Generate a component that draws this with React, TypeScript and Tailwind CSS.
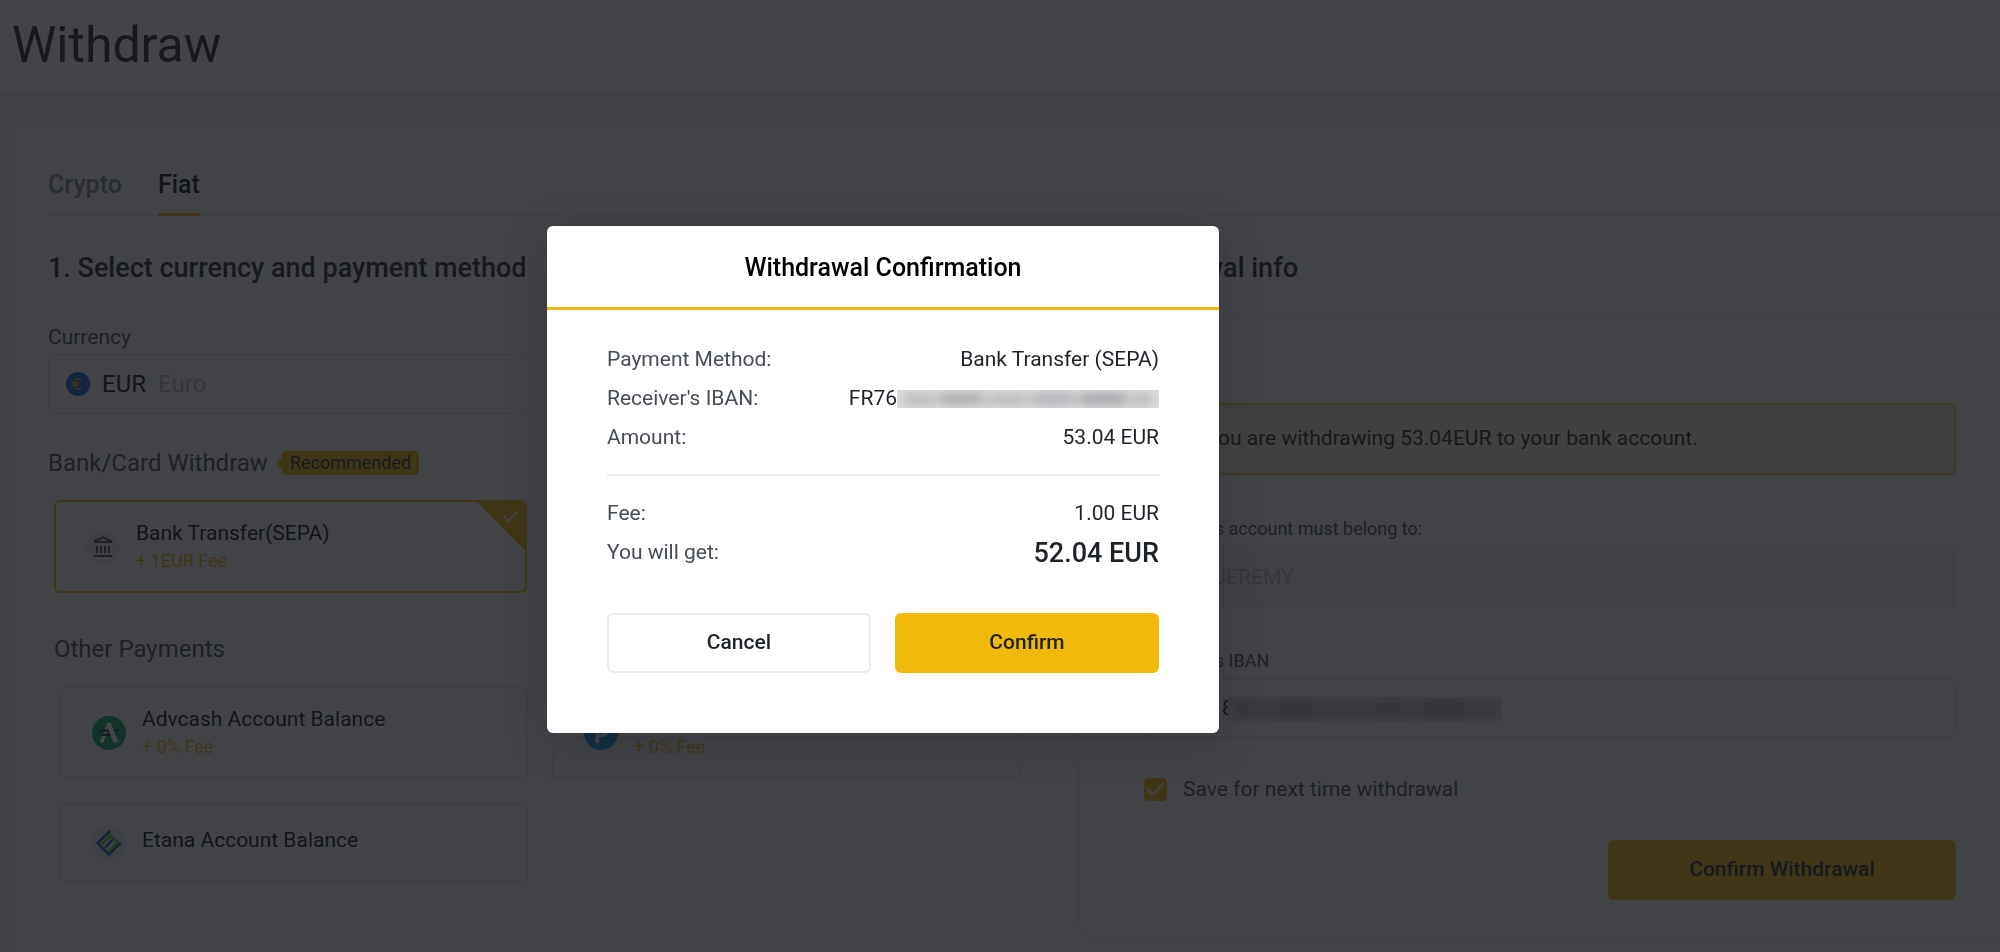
import React, { useState } from 'react';
import { Check } from 'lucide-react';

interface PaymentOption {
  id: string;
  name: string;
  fee?: string;
  icon: React.ReactNode;
}

const BankIcon = () => (
  <svg viewBox="0 0 34 34" className="w-[34px] h-[34px] shrink-0" aria-hidden="true">
    <circle cx="17" cy="17" r="17" fill="#f1f1f4" />
    <path d="M8 10.500 17 6l9 4.500V13H8z" fill="#474d57" />
    <path d="M12 11 17 8.500l5 2.500z" fill="#f1f1f4" />
    <path d="M10 16h2v7h-2zM14 16h2v7h-2zM18 16h2v7h-2zM22 16h2v7h-2zM8 25h18v2H8z" fill="#474d57" />
  </svg>
);

const AdvcashIcon = () => (
  <svg viewBox="0 0 34 34" className="w-[34px] h-[34px] shrink-0" aria-hidden="true">
    <circle cx="17" cy="17" r="17" fill="#0ea966" />
    <path d="M15.500 7h3.500l-7.500 19.500h-4z" fill="#fff" />
    <path d="M5.500 13.500h22l-1.500 2.200H8zM8.500 17.800h17L24 20H10z" fill="#14344a" />
    <path d="M15 9.500 16.500 7H19l7.500 19.500h-5.200z" fill="#fff" />
  </svg>
);

const PayeerIcon = () => (
  <svg viewBox="0 0 34 34" className="w-[34px] h-[34px] shrink-0" aria-hidden="true">
    <circle cx="17" cy="17" r="17" fill="#0a9be0" />
    <path d="M13.300 27V9.500h5.200a4.800 4.800 0 0 1 0 9.600h-5.200" fill="none" stroke="#fff" strokeWidth="3.400" />
  </svg>
);

const EtanaIcon = () => (
  <svg viewBox="0 0 34 34" className="w-[34px] h-[34px] shrink-0" aria-hidden="true">
    <circle cx="17" cy="17" r="17" fill="#f1f1f4" />
    <g fill="none" strokeWidth="2.600">
      <path d="M18 5 5.500 17.200 17 28.700l12-12" stroke="#1662ad" />
      <path d="m13 21.500 8-8" stroke="#1662ad" />
      <path d="m9.500 18.500 9-9 7.500 7-9 9" stroke="#4fb82e" />
    </g>
  </svg>
);

const EuroIcon = () => (
  <svg viewBox="0 0 24 24" className="w-6 h-6 shrink-0" aria-hidden="true">
    <circle cx="12" cy="12" r="12" fill="#0f5fd7" />
    <path d="M16 8.200a5 5 0 1 0 0 7.600M6.500 10.800h7M6.500 13.200h6.500" fill="none" stroke="#f0b90b" strokeWidth="1.500" />
  </svg>
);

const SEPA_OPTION: PaymentOption = { id: 'sepa', name: 'Bank Transfer(SEPA)', fee: '+ 1EUR Fee', icon: <BankIcon /> };

const OTHER_PAYMENTS: PaymentOption[] = [
  { id: 'advcash', name: 'Advcash Account Balance', fee: '+ 0% Fee', icon: <AdvcashIcon /> },
  { id: 'payeer', name: 'Payeer Account Balance', fee: '+ 0% Fee', icon: <PayeerIcon /> },
  { id: 'etana', name: 'Etana Account Balance', icon: <EtanaIcon /> },
];

function PaymentCard({ option, selected = false }: { option: PaymentOption; selected?: boolean }) {
  return (
    <button
      type="button"
      className={`relative flex items-center gap-4 overflow-hidden rounded-md border-2 pl-[30px] pr-6 text-left ${
        selected ? 'border-[#f0b90b]' : 'border-[#eaecef]'
      } ${option.fee ? 'h-[93px]' : 'h-20'}`}
    >
      {option.icon}
      <span className={option.fee ? 'flex flex-col' : 'flex flex-col pb-1.5'}>
        <span className="text-[21px] leading-7 text-[#0b0e11]">{option.name}</span>
        {option.fee && <span className="text-lg leading-7 text-[#f0b90b]">{option.fee}</span>}
      </span>
      {selected && (
        <svg viewBox="0 0 48 48" className="absolute right-0 top-0 w-12 h-12" aria-hidden="true">
          <path d="M0 0h48v48z" fill="#f0b90b" />
          <path d="m27 14 5 5 9-10" fill="none" stroke="#fff" strokeWidth="2" />
        </svg>
      )}
    </button>
  );
}

// Smudged strip that covers the private part of an account number
function Redacted({ className }: { className: string }) {
  return (
    <span className={`flex items-center overflow-hidden ${className}`} aria-hidden="true">
      <span className="flex h-3 w-full items-center justify-between gap-1 px-1.5 blur-[6px]">
        <span className="h-3 w-[13%] bg-[#b4b6b8]" />
        <span className="h-3 w-[19%] bg-[#a3a5a8]" />
        <span className="h-3 w-[16%] bg-[#b4b6b8]" />
        <span className="h-3 w-[18%] bg-[#a9abae]" />
        <span className="h-3 w-[20%] bg-[#9c9ea1]" />
        <span className="h-3 w-[9%] bg-[#b4b6b8]" />
      </span>
    </span>
  );
}

function SummaryRow({ label, children }: { label: string; children: React.ReactNode }) {
  return (
    <div className="flex items-center justify-between h-[39px]">
      <dt className="text-[#474d57]">{label}</dt>
      <dd className="text-[#1e2329]">{children}</dd>
    </div>
  );
}

function ConfirmationDialog() {
  return (
    <div
      role="dialog"
      aria-modal="true"
      aria-labelledby="confirmation-title"
      className="w-[672px] rounded-md bg-white shadow-[0_8px_40px_rgba(20,21,26,0.25)]"
    >
      <h2 id="confirmation-title" className="flex h-[84px] items-center justify-center border-b-[3px] border-[#f0b90b] pt-1 text-[25px] font-medium text-black">
        Withdrawal Confirmation
      </h2>
      <div className="px-[60px] pt-[31px] pb-[60px] text-[21px]">
        <dl>
          <SummaryRow label="Payment Method:">Bank Transfer (SEPA)</SummaryRow>
          <SummaryRow label="Receiver's IBAN:">
            <span className="flex items-center">
              FR76
              <Redacted className="h-[18px] w-[262px] bg-[#dfe0e1]" />
            </span>
          </SummaryRow>
          <SummaryRow label="Amount:">53.04 EUR</SummaryRow>
          <div className="mt-4 mb-[19px] h-0.5 bg-[#eaecef]" />
          <SummaryRow label="Fee:">1.00 EUR</SummaryRow>
          <SummaryRow label="You will get:">
            <span className="text-[27px] font-medium">52.04 EUR</span>
          </SummaryRow>
        </dl>
        <div className="mt-10 grid grid-cols-2 gap-6 font-medium text-[#1e2329]">
          <button type="button" className="h-[60px] rounded-md border-2 border-[#eaecef]">Cancel</button>
          <button type="button" className="h-[60px] rounded-md bg-[#f0b90b]">Confirm</button>
        </div>
      </div>
    </div>
  );
}

export default function App() {
  const [saveAccount, setSaveAccount] = useState(true);

  return (
    <div className="flex min-h-screen flex-col bg-[#fafafa] font-[Roboto,sans-serif] text-[#1e2329]">
      <header className="flex h-24 items-center border-b-2 border-[#f0f1f2] bg-white px-3 pb-1">
        <h1 className="text-[50px] leading-none">Withdraw</h1>
      </header>

      <main className="ml-3 mt-8 flex-1 rounded-tl-xl bg-white pl-9 shadow-[0_0_6px_rgba(0,0,0,0.08)]">
        <nav className="flex h-[88px] items-end gap-9 border-b-2 border-[#f0f1f2] text-[25px] leading-9 font-medium">
          <a href="#crypto" className="flex h-[47px] items-start text-[#848e9c]">Crypto</a>
          <a href="#fiat" className="-mb-0.5 flex h-[49px] items-start border-b-[3px] border-[#f0b90b] text-[#0b0e11]">Fiat</a>
        </nav>

        <div className="grid grid-cols-[972px_1fr] gap-[60px]">
          <section>
            <h2 className="mt-8 text-[27px] leading-10 font-medium">1. Select currency and payment method</h2>
            <label htmlFor="currency" className="mt-[35px] block text-[21px] leading-7 text-[#474d57]">Currency</label>
            <button id="currency" type="button" className="mt-[3px] flex h-[60px] w-full items-center rounded-md border-2 border-[#eaecef] px-4 text-2xl">
              <EuroIcon />
              <span className="ml-3 text-[#0b0e11]">EUR</span>
              <span className="ml-3 text-[#b7bdc6]">Euro</span>
            </button>

            <div className="mt-[33px] flex items-center gap-3.5">
              <h3 className="text-2xl text-[#474d57]">Bank/Card Withdraw</h3>
              <span className="relative rounded bg-[#f0b90b] px-2 text-lg leading-6">
                <span className="absolute -left-1 top-2 h-2 w-2 rotate-45 bg-[#f0b90b]" />
                Recommended
              </span>
            </div>
            <div className="mt-[21px] grid grid-cols-2 gap-5 pl-1.5">
              <PaymentCard option={SEPA_OPTION} selected />
            </div>

            <h3 className="mt-10 ml-1.5 text-2xl text-[#474d57]">Other Payments</h3>
            <div className="mt-[21px] grid grid-cols-2 gap-6 pl-3">
              {OTHER_PAYMENTS.map(option => (
                <PaymentCard key={option.id} option={option} />
              ))}
            </div>
          </section>

          <section className="pb-4">
            <h2 className="mt-8 text-[27px] leading-10 font-medium">2. Withdrawal info</h2>
            <div className="mt-[29px] rounded-l-xl pl-16 pr-11 pt-[86px] pb-9 shadow-[0_0_8px_rgba(0,0,0,0.12)]">
              <p className="flex h-[72px] items-center rounded-md border-2 border-[#f0b90b]/70 bg-[#fdf0d4] pl-[60px] text-[21px]">
                You are withdrawing 53.04EUR to your bank account.
              </p>
              <label htmlFor="holder" className="mt-10 block text-lg leading-7 text-[#474d57]">Receiver's account must belong to:</label>
              <input id="holder" readOnly value="MR JEREMY" className="mt-1 h-[60px] w-full rounded-md border-2 border-[#eaecef] bg-[#f5f5f5] px-8 text-[21px] text-[#b7bdc6]" />
              <label htmlFor="iban" className="mt-10 block text-lg leading-7 text-[#474d57]">Receiver's IBAN</label>
              <div className="relative mt-[3px]">
                <input id="iban" readOnly value="FR7618" className="block h-[60px] w-full rounded-md border-2 border-[#eaecef] px-4 text-[21px]" />
                <Redacted className="absolute left-[84px] top-[19px] h-6 w-[274px] bg-[#e6e7e8]" />
              </div>
              <label className="mt-[37px] flex items-center gap-4 text-[21px] leading-7 text-[#474d57]">
                <span className="relative h-[23px] w-[23px]">
                  <input
                    type="checkbox"
                    checked={saveAccount}
                    onChange={e => setSaveAccount(e.target.checked)}
                    className="block h-full w-full appearance-none rounded-sm border border-[#f0b90b] checked:bg-[#f0b90b]"
                  />
                  {saveAccount && <Check className="pointer-events-none absolute inset-0 h-full w-full text-white" strokeWidth={2.5} />}
                </span>
                Save for next time withdrawal
              </label>
              <div className="mt-[37px] flex justify-end">
                <button type="button" className="h-[60px] w-[348px] rounded-md bg-[#f0b90b] text-[21px] font-medium">Confirm Withdrawal</button>
              </div>
            </div>
          </section>
        </div>
      </main>

      <div className="fixed inset-0 flex items-center justify-center bg-[#14151a]/80 pt-1.5 pr-[234px]">
        <ConfirmationDialog />
      </div>
    </div>
  );
}
